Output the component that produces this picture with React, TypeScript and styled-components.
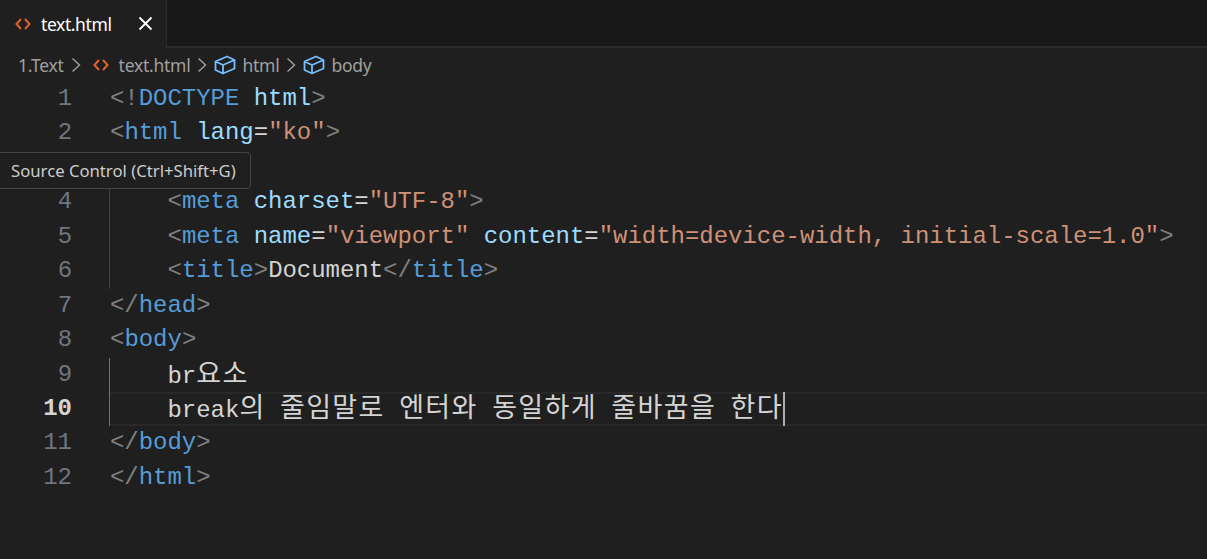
import styled, { createGlobalStyle } from "styled-components";
import { ReactNode } from "react";

const GlobalStyle = createGlobalStyle`
    html, body {
        margin: 0;
        padding: 0;
        height: 100%;
        overflow: hidden;
        background: #1f1f1f;
    }
`;

const Editor = styled.div`
    position: relative;
    width: 1207px;
    height: 559px;
    overflow: hidden;
    background: #1f1f1f;
    font-family: "Noto Sans", sans-serif;
`;

const TabBar = styled.div`
    display: flex;
    height: 48px;
    background: #181818;
    box-shadow: inset 0 -2px 0 #2b2b2b;
`;

const Tab = styled.div`
    display: flex;
    align-items: center;
    width: 167px;
    height: 48px;
    box-sizing: border-box;
    padding: 0 13px 1px 15px;
    background: #1f1f1f;
    border-right: 1px solid #2b2b2b;
    color: #ffffff;
    font-size: 17.5px;
    letter-spacing: -0.4px;
`;

const TabName = styled.span`
    margin-left: 10px;
    flex: 1;
`;

const CloseIcon = styled.svg`
    display: block;
    width: 15px;
    height: 15px;
`;

const Breadcrumb = styled.div`
    display: flex;
    align-items: center;
    height: 34px;
    padding-left: 18px;
    color: #a0a0a0;
    font-size: 17.5px;
    letter-spacing: -0.25px;
`;

const Crumb = styled.span<{ $gap?: number }>`
    margin-left: ${(p) => p.$gap ?? 0}px;
`;

const Chevron = styled.svg<{ $left: number }>`
    display: block;
    width: 10px;
    height: 16px;
    margin-left: ${(p) => p.$left}px;
`;

const HtmlIcon = styled.svg<{ $left?: number }>`
    display: block;
    width: 16px;
    height: 14px;
    margin-left: ${(p) => p.$left ?? 0}px;
`;

const CubeIcon = styled.svg`
    display: block;
    width: 22px;
    height: 20px;
    margin-left: 7px;
`;

const Code = styled.div`
    font-family: "Liberation Mono", "Noto Sans CJK KR", monospace;
    font-size: 24px;
    letter-spacing: -0.03px;
    color: #d4d4d4;
`;

const Row = styled.div`
    display: flex;
    height: 34.45px;
    line-height: 34.45px;
`;

const LineNumber = styled.div<{ $active?: boolean }>`
    width: 72px;
    margin-right: 37px;
    flex: none;
    text-align: right;
    color: ${(p) => (p.$active ? "#d4d4d4" : "#6e7681")};
    font-weight: ${(p) => (p.$active ? "bold" : "normal")};
`;

const LineText = styled.div<{ $guide?: "dim" | "bright"; $current?: boolean }>`
    flex: 1;
    padding-left: 1px;
    white-space: pre;
    box-shadow: ${(p) =>
        [
            p.$guide === "dim" ? "inset 1px 0 0 #404040" : "",
            p.$guide === "bright" ? "inset 1px 0 0 #707070" : "",
            p.$current ? "inset 0 2px 0 #282828, inset 0 -2px 0 #282828" : "",
        ]
            .filter(Boolean)
            .join(", ") || "none"};
`;

const Bracket = styled.span`
    color: #808080;
`;

const Tag = styled.span`
    color: #569cd6;
`;

const Attr = styled.span`
    color: #9cdcfe;
`;

const Str = styled.span`
    color: #ce9178;
`;

const Hangul = styled.span`
    font-family: "Noto Sans CJK KR", sans-serif;
    font-size: 27px;
    letter-spacing: 1.36px;
    line-height: 1;
`;

const Caret = styled.span`
    display: inline-block;
    width: 2px;
    height: 34px;
    vertical-align: top;
    background: #aeafad;
`;

const Tooltip = styled.div`
    position: absolute;
    left: -8px;
    top: 152px;
    height: 37px;
    box-sizing: border-box;
    padding: 0 14px 0 18px;
    display: flex;
    align-items: center;
    background: #1f1f1f;
    border: 1px solid #454545;
    border-radius: 4px;
    color: #cccccc;
    font-size: 16.7px;
`;

function ChevronRight({ left }: { left: number }) {
    return (
        <Chevron $left={left} viewBox="0 0 10 16">
            <path d="M1.5 1.5 L8.5 8 L1.5 14.5" fill="none" stroke="#a0a0a0" strokeWidth="1.4" />
        </Chevron>
    );
}

function FileIcon({ left }: { left?: number }) {
    return (
        <HtmlIcon $left={left} viewBox="0 0 16 14">
            <path
                d="M6 2 L1.5 7 L6 12 M10 2 L14.5 7 L10 12"
                fill="none"
                stroke="#e2622c"
                strokeWidth="2"
            />
        </HtmlIcon>
    );
}

function Cube() {
    return (
        <CubeIcon viewBox="0 0 22 20">
            <path
                d="M1.5 6.5 L13 1.5 L20.5 5 L20.5 13.5 L9 18.5 L1.5 15 Z M1.5 6.5 L9 10 L20.5 5 M9 10 L9 18.5"
                fill="none"
                stroke="#75beff"
                strokeWidth="1.8"
                strokeLinejoin="round"
            />
        </CubeIcon>
    );
}

const open = (name: string) => (
    <>
        <Bracket>&lt;</Bracket>
        <Tag>{name}</Tag>
    </>
);

const close = (name: string) => (
    <>
        <Bracket>&lt;/</Bracket>
        <Tag>{name}</Tag>
        <Bracket>&gt;</Bracket>
    </>
);

const gt = <Bracket>&gt;</Bracket>;

type Line = { content: ReactNode; guide?: "dim" | "bright"; current?: boolean };

const lines: Line[] = [
    {
        content: (
            <>
                <Bracket>&lt;!</Bracket>
                <Tag>DOCTYPE</Tag> <Attr>html</Attr>
                {gt}
            </>
        ),
    },
    {
        content: (
            <>
                {open("html")} <Attr>lang</Attr>=<Str>"ko"</Str>
                {gt}
            </>
        ),
    },
    {
        content: (
            <>
                {open("head")}
                {gt}
            </>
        ),
    },
    {
        guide: "dim",
        content: (
            <>
                {"    "}
                {open("meta")} <Attr>charset</Attr>=<Str>"UTF-8"</Str>
                {gt}
            </>
        ),
    },
    {
        guide: "dim",
        content: (
            <>
                {"    "}
                {open("meta")} <Attr>name</Attr>=<Str>"viewport"</Str> <Attr>content</Attr>=
                <Str>"width=device-width, initial-scale=1.0"</Str>
                {gt}
            </>
        ),
    },
    {
        guide: "dim",
        content: (
            <>
                {"    "}
                {open("title")}
                {gt}Document{close("title")}
            </>
        ),
    },
    { content: close("head") },
    {
        content: (
            <>
                {open("body")}
                {gt}
            </>
        ),
    },
    {
        guide: "bright",
        content: (
            <>
                {"    "}br<Hangul>요소</Hangul>
            </>
        ),
    },
    {
        guide: "bright",
        current: true,
        content: (
            <>
                {"    "}break<Hangul>의</Hangul> <Hangul>줄임말로</Hangul> <Hangul>엔터와</Hangul>{" "}
                <Hangul>동일하게</Hangul> <Hangul>줄바꿈을</Hangul> <Hangul>한다</Hangul>
                <Caret />
            </>
        ),
    },
    { content: close("body") },
    { content: close("html") },
];

export default function App() {
    return (
        <Editor>
            <GlobalStyle />
            <TabBar>
                <Tab>
                    <FileIcon />
                    <TabName>text.html</TabName>
                    <CloseIcon viewBox="0 0 15 15">
                        <path d="M1.5 1.5 L13.5 13.5 M13.5 1.5 L1.5 13.5" stroke="#ffffff" strokeWidth="1.8" fill="none" />
                    </CloseIcon>
                </Tab>
            </TabBar>
            <Breadcrumb>
                <Crumb>1.Text</Crumb>
                <ChevronRight left={7} />
                <FileIcon left={12} />
                <Crumb $gap={10}>text.html</Crumb>
                <ChevronRight left={7} />
                <Cube />
                <Crumb $gap={6}>html</Crumb>
                <ChevronRight left={7} />
                <Cube />
                <Crumb $gap={6}>body</Crumb>
            </Breadcrumb>
            <Code>
                {lines.map((line, i) => (
                    <Row key={i}>
                        <LineNumber $active={line.current}>{i + 1}</LineNumber>
                        <LineText $guide={line.guide} $current={line.current}>
                            {line.content}
                        </LineText>
                    </Row>
                ))}
            </Code>
            <Tooltip>Source Control (Ctrl+Shift+G)</Tooltip>
        </Editor>
    );
}
